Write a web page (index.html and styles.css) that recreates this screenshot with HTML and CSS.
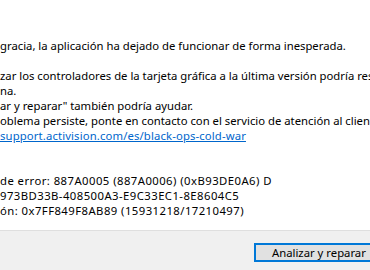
FILE: index.html
```html
<!DOCTYPE html>
<html lang="es">
<head>
    <meta charset="UTF-8">
    <meta name="viewport" content="width=device-width, initial-scale=1.0">
    <title>Error</title>
    <link rel="stylesheet" href="styles.css">
</head>
<body>
    <div class="dialog">
        <div class="message">
            <div class="line">gracia, la aplicación ha dejado de funcionar de forma inesperada.</div>
            <div class="line gap">zar los controladores de la tarjeta gráfica a la última versión podría reso</div>
            <div class="line">na.</div>
            <div class="line">ar y reparar" también podría ayudar.</div>
            <div class="line">oblema persiste, ponte en contacto con el servicio de atención al cliente</div>
            <div class="line"><a class="link" href="#">support.activision.com/es/black-ops-cold-war</a></div>
            <div class="line code gap2">de error: 887A0005 (887A0006) (0xB93DE0A6) D</div>
            <div class="line code">973BD33B-408500A3-E9C33EC1-8E8604C5</div>
            <div class="line code">ón: 0x7FF849F8AB89 (15931218/17210497)</div>
        </div>
        <div class="footer">
            <button class="btn">Analizar y reparar</button>
        </div>
    </div>
</body>
</html>
```

FILE: styles.css
```css
html, body {
    margin: 0;
    padding: 0;
}
body {
    width: 370px;
    height: 270px;
    overflow: hidden;
    background-color: #f0f0f0;
    font-family: 'Noto Sans', 'Open Sans', sans-serif;
    font-size: 11.3px;
    color: #000;
}
.dialog {
    display: flex;
    flex-direction: column;
}
.message {
    background: white;
    height: 230px;
    padding-top: 38px;
    box-sizing: border-box;
}
.line {
    line-height: 15px;
    white-space: nowrap;
    overflow: hidden;
}
.code {
    letter-spacing: 0.45px;
}
.gap {
    margin-top: 15px;
}
.gap2 {
    margin-top: 30px;
}
.link {
    color: #0066cc;
    text-decoration: underline;
    letter-spacing: 0.13px;
}
.footer {
    border-top: 1px solid #dfdfdf;
    padding: 12px 0 0 254px;
    white-space: nowrap;
    overflow: hidden;
}
.btn {
    font-family: inherit;
    font-size: 11.3px;
    height: 19px;
    padding: 0 0 0 16px;
    width: 130px;
    text-align: left;
    background: #e1e1e1;
    border: 2px solid #0078d7;
    color: #000;
    line-height: 14px;
}
```
